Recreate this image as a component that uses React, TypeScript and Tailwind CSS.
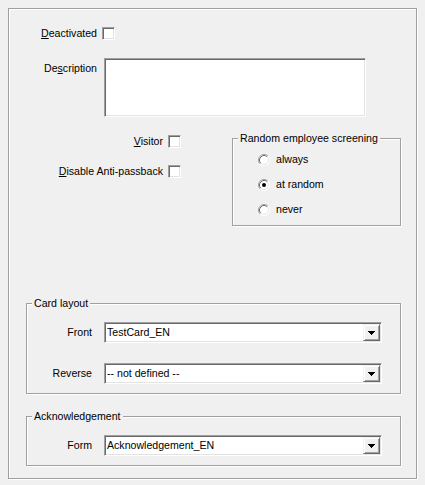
import React from "react";

function CheckBox() {
  return (
    <span className="block w-[13px] h-[13px] bg-white border border-t-[#a0a0a0] border-l-[#a0a0a0] border-r-white border-b-white shadow-[inset_1px_1px_0_#696969,inset_-1px_-1px_0_#e3e3e3]" />
  );
}

function Radio({ checked }: { checked?: boolean }) {
  return (
    <svg width="12" height="12" viewBox="0 0 12 12" className="block">
      <circle cx="6" cy="6" r="5.5" fill="#fff" />
      <path d="M2.11 9.89 A5.5 5.5 0 0 1 9.89 2.11" fill="none" stroke="#a0a0a0" strokeWidth="1" />
      <path d="M9.89 2.11 A5.5 5.5 0 0 1 2.11 9.89" fill="none" stroke="#ffffff" strokeWidth="1" />
      <path d="M2.82 9.18 A4.5 4.5 0 0 1 9.18 2.82" fill="none" stroke="#696969" strokeWidth="1" />
      <path d="M9.18 2.82 A4.5 4.5 0 0 1 2.82 9.18" fill="none" stroke="#e3e3e3" strokeWidth="1" />
      {checked && <circle cx="6" cy="6" r="2" fill="#000" />}
    </svg>
  );
}

function Select({ text }: { text: string }) {
  return (
    <div className="ml-[12px] w-[278px] h-[21px] p-[1px] flex bg-white border border-t-[#a0a0a0] border-l-[#a0a0a0] border-r-white border-b-white shadow-[inset_1px_1px_0_#696969,inset_-1px_-1px_0_#e3e3e3]">
      <div className="flex-1 flex items-center pl-[1px] whitespace-nowrap overflow-hidden">{text}</div>
      <div className="w-[17px] h-[17px] flex items-center justify-center bg-[#f0f0f0] border border-t-[#f0f0f0] border-l-[#f0f0f0] border-r-[#696969] border-b-[#696969] shadow-[inset_1px_1px_0_#fff,inset_-1px_-1px_0_#a0a0a0]">
        <svg width="7" height="4" viewBox="0 0 7 4" className="block" shapeRendering="crispEdges">
          <rect x="0" y="0" width="7" height="1" fill="#000" />
          <rect x="1" y="1" width="5" height="1" fill="#000" />
          <rect x="2" y="2" width="3" height="1" fill="#000" />
          <rect x="3" y="3" width="1" height="1" fill="#000" />
        </svg>
      </div>
    </div>
  );
}

export default function App() {
  return (
    <div className="w-[425px] h-[485px] bg-[#f0f0f0] pt-[8px] pl-[8px] font-['Liberation_Sans',Arial,sans-serif] text-[10.6px] leading-[13px] text-black">
      <div className="w-[409px] h-[471px] border border-[#a0a0a0] shadow-[inset_1px_1px_0_#fff,1px_1px_0_#fff] flex flex-col">
        <div className="flex items-center mt-[18px]">
          <div className="w-[88px] text-right">
            <u>D</u>eactivated
          </div>
          <div className="ml-[5px]">
            <CheckBox />
          </div>
        </div>

        <div className="flex items-start mt-[18px]">
          <div className="w-[88px] text-right pt-[4px]">
            De<u>s</u>cription
          </div>
          <div className="ml-[7px] w-[262px] h-[59px] bg-white border border-t-[#a0a0a0] border-l-[#a0a0a0] border-r-white border-b-white shadow-[inset_1px_1px_0_#696969,inset_-1px_-1px_0_#e3e3e3]" />
        </div>

        <div className="flex items-start">
          <div className="w-[223px] flex flex-col mt-[18px]">
            <div className="flex items-center">
              <div className="w-[154px] text-right">
                <u>V</u>isitor
              </div>
              <div className="ml-[5px]">
                <CheckBox />
              </div>
            </div>
            <div className="flex items-center mt-[17px]">
              <div className="w-[154px] text-right">
                <u>D</u>isable Anti-passback
              </div>
              <div className="ml-[5px]">
                <CheckBox />
              </div>
            </div>
          </div>
          <fieldset className="mt-[15px] w-[169px] h-[94px] border border-[#a0a0a0] shadow-[inset_1px_1px_0_#fff,1px_1px_0_#fff]">
            <legend className="ml-[5px] px-[2px] bg-[#f0f0f0]">Random employee screening</legend>
            <div className="flex flex-col gap-[12px] pl-[25px] mt-[8px]">
              <div className="flex items-center h-[13px]">
                <Radio />
                <span className="ml-[6px]">always</span>
              </div>
              <div className="flex items-center h-[13px]">
                <Radio checked />
                <span className="ml-[6px]">at random</span>
              </div>
              <div className="flex items-center h-[13px]">
                <Radio />
                <span className="ml-[6px]">never</span>
              </div>
            </div>
          </fieldset>
        </div>

        <fieldset className="ml-[17px] mt-[71px] w-[375px] h-[97px] border border-[#a0a0a0] shadow-[inset_1px_1px_0_#fff,1px_1px_0_#fff]">
          <legend className="ml-[5px] px-[2px] bg-[#f0f0f0]">Card layout</legend>
          <div className="flex items-center mt-[12px]">
            <div className="w-[65px] text-right">Front</div>
            <Select text="TestCard_EN" />
          </div>
          <div className="flex items-center mt-[20px]">
            <div className="w-[65px] text-right">Reverse</div>
            <Select text="-- not defined --" />
          </div>
        </fieldset>

        <fieldset className="ml-[17px] mt-[16px] w-[375px] h-[56px] border border-[#a0a0a0] shadow-[inset_1px_1px_0_#fff,1px_1px_0_#fff]">
          <legend className="ml-[5px] px-[2px] bg-[#f0f0f0]">Acknowledgement</legend>
          <div className="flex items-center mt-[12px]">
            <div className="w-[65px] text-right">Form</div>
            <Select text="Acknowledgement_EN" />
          </div>
        </fieldset>
      </div>
    </div>
  );
}
